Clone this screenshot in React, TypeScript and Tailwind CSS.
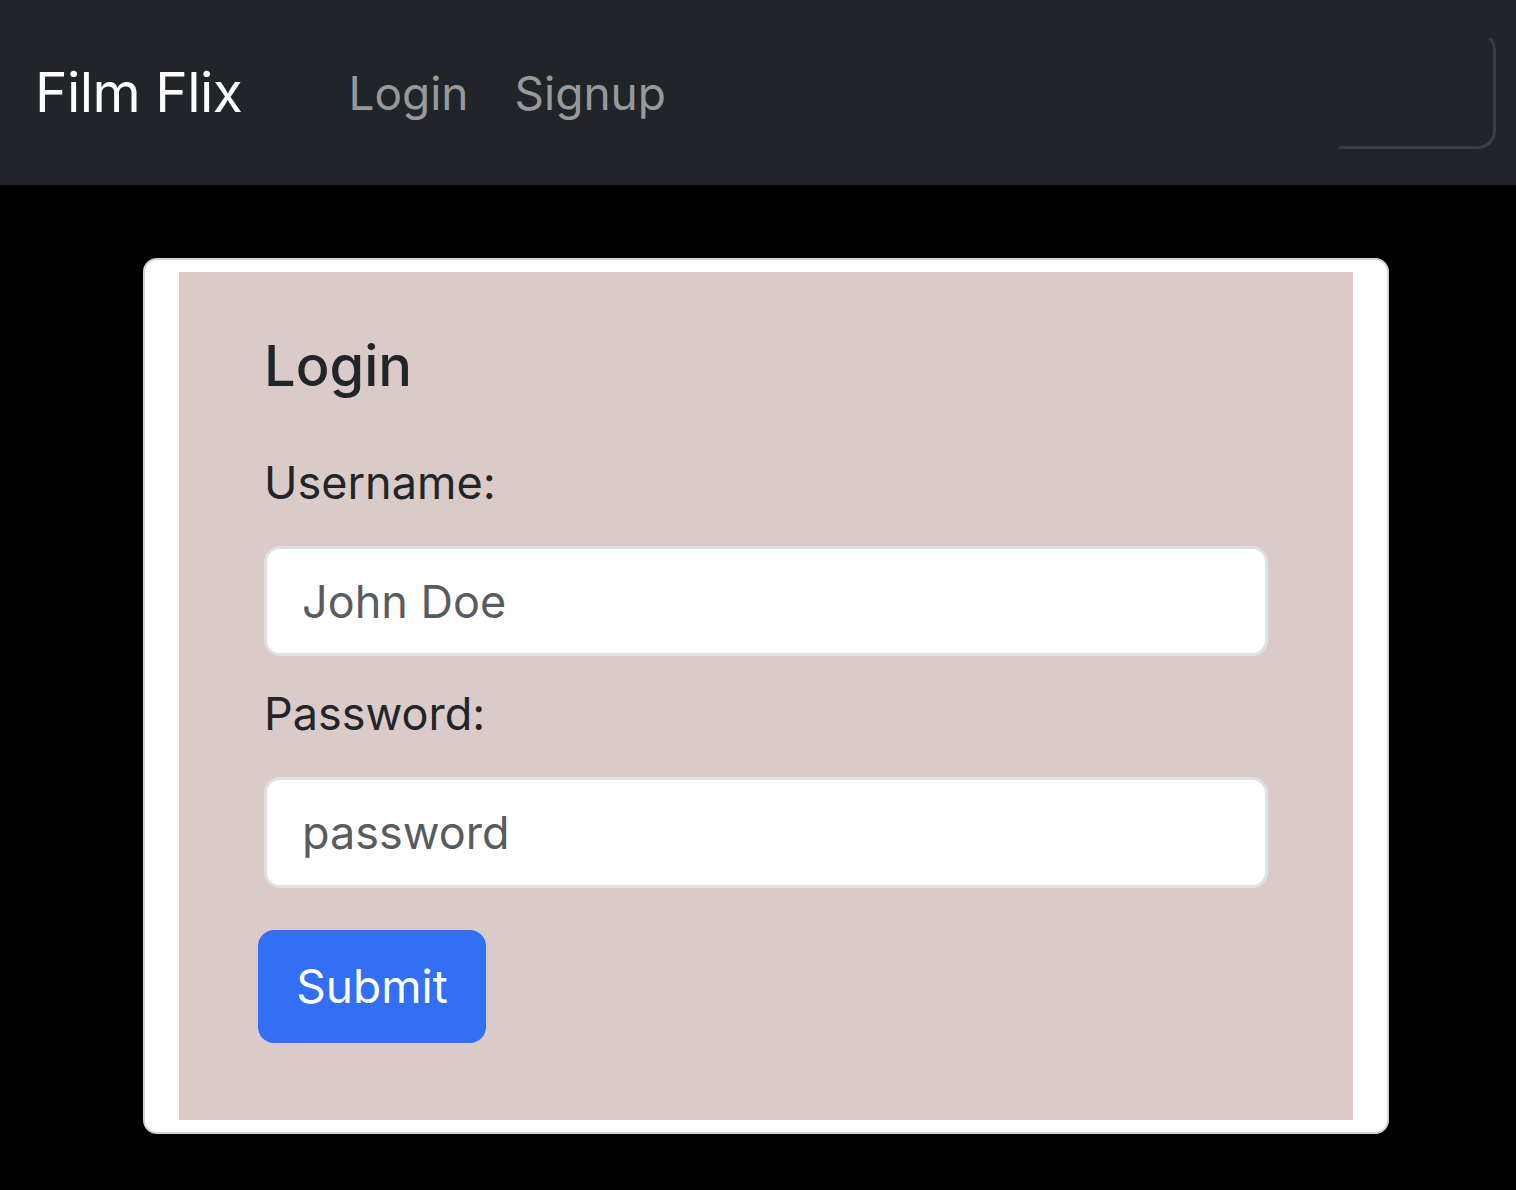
import { useState } from "react";

function NavBar() {
  return (
    <nav className="flex h-[185px] items-center bg-[#212529] pl-[35px] pr-[20px]">
      <span className="text-[55px] leading-none text-white tracking-[-0.5px]">Film Flix</span>
      <div className="ml-[106px] flex gap-[46px] text-[46px] leading-none text-[#97999b]">
        <a href="#">Login</a>
        <a href="#">Signup</a>
      </div>
      {/* toggler box, mostly cut off */}
      <div className="ml-auto mt-[32px] h-[117px] w-[158px] self-start rounded-r-[18px] border-[3px] border-t-transparent border-l-transparent border-[#3a3e42]" />
    </nav>
  );
}

function LoginForm() {
  const [username, setUsername] = useState("");
  const [password, setPassword] = useState("");

  return (
    <div className="rounded-[14px] border-2 border-[#d4d4d4] bg-white px-[34px] py-[12px]">
      <form
        className="flex flex-col bg-[#dacbc8] px-[85px] pt-[61px] pb-[77px]"
        onSubmit={(e) => e.preventDefault()}
      >
        <h2 className="mb-[48px] text-[56px] font-medium leading-[1.2] text-[#212529]">Login</h2>
        <label className="mb-[29px] text-[45px] leading-[69px] text-[#212529]">Username:</label>
        <input
          type="text"
          placeholder="John Doe"
          value={username}
          onChange={(e) => setUsername(e.target.value)}
          className="h-[110px] w-full rounded-[16px] border-[3px] border-[#dee2e6] bg-white px-[35px] text-[45px] text-[#212529] placeholder:text-[#595c5f] outline-none"
        />
        <label className="mt-[23px] mb-[29px] text-[45px] leading-[69px] text-[#212529]">Password:</label>
        <input
          type="password"
          placeholder="password"
          value={password}
          onChange={(e) => setPassword(e.target.value)}
          className="h-[111px] w-full rounded-[16px] border-[3px] border-[#dee2e6] bg-white px-[35px] text-[45px] text-[#212529] placeholder:text-[#595c5f] outline-none"
        />
        <div className="mt-[42px]">
          <button
            type="submit"
            className="ml-[-6px] h-[113px] w-[228px] rounded-[16px] bg-[#336ff5] text-[46px] text-white"
          >
            Submit
          </button>
        </div>
      </form>
    </div>
  );
}

export default function App() {
  return (
    <div className="min-h-[1190px] bg-black" style={{ fontFamily: "Inter, 'Noto Sans', sans-serif" }}>
      <NavBar />
      <main className="pl-[143px] pr-[127px] pt-[73px]">
        <LoginForm />
      </main>
    </div>
  );
}
